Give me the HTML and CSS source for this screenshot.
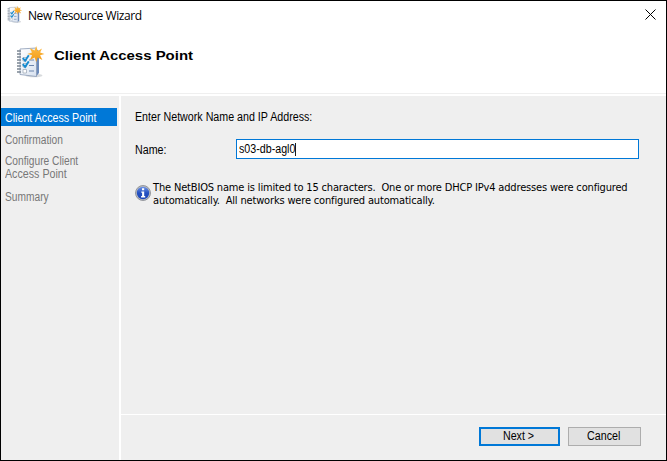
FILE: index.html
```html
<!DOCTYPE html>
<html lang="en">
<head>
<meta charset="utf-8">
<title>New Resource Wizard</title>
<link rel="stylesheet" href="styles.css">
</head>
<body>
<svg class="defs" width="0" height="0" aria-hidden="true">
  <defs>
    <linearGradient id="page" x1="0" y1="0" x2="1" y2="1"><stop offset="0" stop-color="#fff"/><stop offset="1" stop-color="#d8e2f0"/></linearGradient>
    <linearGradient id="star" x1="0" y1="0" x2="0" y2="1"><stop offset="0" stop-color="#ffbd45"/><stop offset="1" stop-color="#f09a18"/></linearGradient>
    <linearGradient id="ball" x1="0" y1="0" x2="0" y2="1"><stop offset="0" stop-color="#6f94e6"/><stop offset=".5" stop-color="#2450c0"/><stop offset="1" stop-color="#1d46b8"/></linearGradient>
    <symbol id="notebook" viewBox="0 0 32 32">
      <ellipse cx="18" cy="29.500" rx="8.500" ry="1.800" fill="#d8dadd"/>
      <path d="M20 3l3 2v22l-3 3.500z" fill="#6c8bbb"/>
      <path d="M4 3L20.500 2v28.500L4 28.500z" fill="url(#page)" stroke="#8a9bb5" stroke-width=".8"/>
      <path d="M1 5h4M1 8h4M1 11h4M1 14h4M1 17h4M1 20h4M1 23h4M1 26h4" stroke="#7b8693" stroke-width="1.300"/>
      <path d="M13 14h5M13 19.500h5M13 25h5" stroke="#6d86ad" stroke-width="1.200"/>
      <path d="M7 11.500h3.500V15H7zM7 17.500h3.500V21H7zM7 23.500h3.500V27H7z" fill="#fff" stroke="#a3adba" stroke-width=".8"/>
      <path d="M6.800 12l2.300 2.700 3.700-5.500M6.800 18.200l2.300 2.700 3.700-5.500" fill="none" stroke="#168bd0" stroke-width="1.900"/>
      <path d="M20.200 0l1.500 4.900 4.300-2.500-1.900 4.200 4.400 1.400-4.400 1.300 2.300 4.700-4.700-2.500-1.500 4.500-1.500-4.500-4.900 2.500 2.300-4.800-4.800-1.200 4.700-1.600-2.300-4.500 4.900 2.700z" fill="url(#star)"/>
    </symbol>
  </defs>
</svg>
<div class="window">
  <header class="titlebar">
    <svg class="app-icon"><use href="#notebook"/></svg>
    <span class="app-title">New Resource Wizard</span>
    <svg class="close" viewBox="0 0 11 11"><path d="M.5.5l10 10M10.500.5l-10 10" stroke="#000" stroke-width="1"/></svg>
  </header>
  <div class="banner">
    <svg class="banner-icon"><use href="#notebook"/></svg>
    <h1>Client Access Point</h1>
  </div>
  <div class="body">
    <nav class="steps">
      <div class="step current"><span class="narrow">Client Access Point</span></div>
      <div class="step"><span class="narrow s2">Confirmation</span></div>
      <div class="step"><span class="narrow s3">Configure Client</span><br><span class="narrow">Access Point</span></div>
      <div class="step last"><span class="narrow s5">Summary</span></div>
    </nav>
    <main>
      <section class="content">
        <p class="prompt"><span class="narrow">Enter Network Name and IP Address:</span></p>
        <div class="field">
          <div class="label"><span class="narrow">Name:</span></div>
          <div class="input"><span class="narrow value">s03-db-agl0<i class="caret"></i></span></div>
        </div>
        <div class="info">
          <svg class="info-icon" viewBox="0 0 16 16"><circle cx="8" cy="8" r="7.500" fill="#b9bcc2" stroke="#85888e" stroke-width=".8"/><circle cx="8" cy="8" r="6.200" fill="url(#ball)"/><path d="M7 3.200h2.200v2H7zM6.300 6.500h2.900v4.600h1v1.300H6.100v-1.300h1V7.700h-.8z" fill="#fff"/></svg>
          <p class="message">The NetBIOS name is limited to 15 characters.&nbsp; One or more DHCP IPv4 addresses were configured<br>automatically.&nbsp; All networks were configured automatically.</p>
        </div>
      </section>
      <footer>
        <div class="button primary"><span class="narrow mid">Next &gt;</span></div>
        <div class="button"><span class="narrow mid">Cancel</span></div>
      </footer>
    </main>
  </div>
</div>
</body>
</html>
```
FILE: styles.css
```css
* { box-sizing: border-box; }
body { margin: 0; font: 12px/13px "Liberation Sans", Arial, sans-serif; color: #000; }
.defs { position: absolute; }
span { white-space: nowrap; }
p, h1 { margin: 0; }
/* The dialog face is a little narrower than the fallback sans. */
.narrow { display: inline-block; vertical-align: top; transform: scaleX(.89); transform-origin: 0 50%; }
.narrow.mid { transform-origin: 50% 50%; margin-right: 2px; }
.window { width: 667px; height: 461px; border: 1px solid #000; background: #fff; display: flex; flex-direction: column; }
.titlebar { height: 28px; display: flex; align-items: center; padding: 0 10px 0 6px; }
.app-icon { width: 17px; height: 17px; margin-bottom: 1px; }
.app-title { font: 12px/16px "Open Sans", sans-serif; margin: 1px 0 0 4px; letter-spacing: -.43px; }
.close { width: 11px; height: 11px; margin: 0 0 2px auto; }
.banner { height: 65px; border-bottom: 1px solid #efefef; display: flex; padding: 17px 0 0 15px; }
.banner-icon { width: 32px; height: 32px; }
h1 { font: bold 13px/18px "Liberation Sans", Arial, sans-serif; margin: 1px 0 0 6px; transform: scaleX(1.15); transform-origin: 0 50%; height: 18px; }
.body { flex: 1; margin-top: 2px; display: grid; grid-template-columns: 118px 1fr; column-gap: 2px; }
.steps { background: #efefef; padding-top: 12px; color: #777; }
.step { padding: 0 0 0 4px; margin-bottom: 8px; }
.step.current { width: 116px; height: 18px; padding-top: 4px; background: #0078d7; color: #fff; }
.step.last { padding-top: 2px; }
.s2, .s3, .s5 { transform: scaleX(.85); }
main { background: #efefef; display: flex; flex-direction: column; }
.content { height: 319px; border-bottom: 1px solid #fff; padding: 15px 0 0 14px; }
.prompt { height: 28px; }
.field { display: flex; }
.label { width: 101px; padding-top: 5px; }
.input { width: 403px; height: 20px; border: 1px solid #0078d7; background: #fff; padding: 3px 2px; }
.value { display: inline-flex; }
.caret { width: 1px; height: 13px; background: #000; }
.info { display: flex; margin-top: 22px; }
.info-icon { width: 16px; height: 16px; margin-top: 4px; }
.message { font: 11px/13px "DejaVu Sans Condensed", "DejaVu Sans", sans-serif; font-stretch: condensed; margin-left: 2px; letter-spacing: -.165px; white-space: nowrap; }
footer { flex: 1; display: flex; gap: 8px; padding: 12px 0 0 358px; }
.button { width: 73px; height: 19px; border: 1px solid #adadad; background: #e1e1e1; display: flex; align-items: center; justify-content: center; }
.button.primary { width: 81px; border: 2px solid #0078d7; }
```
